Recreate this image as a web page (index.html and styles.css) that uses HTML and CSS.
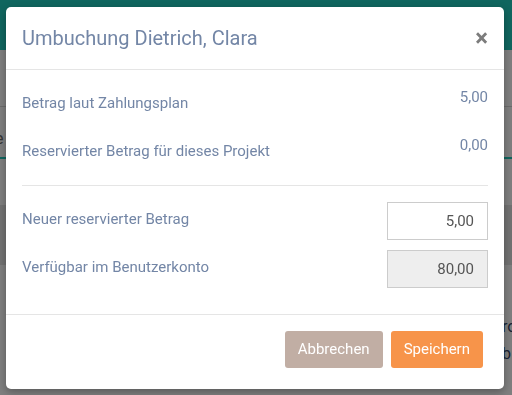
FILE: index.html
```html
<!DOCTYPE html>
<html>
<head lang="de">
    <meta charset="UTF-8">
    <title>Umbuchung</title>
    <link rel="stylesheet" href="styles.css">
</head>
<body>

<div class="page">
    <div class="page-header"></div>
    <div class="page-tabs"></div>
    <div class="page-text">e</div>
    <div class="page-band"></div>
    <div class="page-side">
        <p>ro</p>
        <p>b</p>
    </div>
</div>

<div class="modal-bg"></div>

<div class="modal">
    <div class="modal-header">
        <h4 class="modal-title">Umbuchung Dietrich, Clara</h4>
        <a href="javascript:void(0);" class="close">&times;</a>
    </div>

    <div class="modal-body">
        <div class="form-row">
            <label>Betrag laut Zahlungsplan</label>
            <span class="form-value">5,00</span>
        </div>
        <div class="form-row">
            <label>Reservierter Betrag für dieses Projekt</label>
            <span class="form-value">0,00</span>
        </div>

        <hr class="divider">

        <div class="form-row">
            <label>Neuer reservierter Betrag</label>
            <input type="text" class="form-input" value="5,00">
        </div>
        <div class="form-row">
            <label>Verfügbar im Benutzerkonto</label>
            <input type="text" class="form-input" value="80,00" readonly>
        </div>
    </div>

    <div class="modal-footer">
        <a href="javascript:void(0);" class="btn btn-cancel">Abbrechen</a>
        <a href="javascript:void(0);" class="btn btn-save">Speichern</a>
    </div>
</div>

</body>
</html>
```

FILE: styles.css
```css
html, body, div, p, span, h4, a, hr, label {
    padding: 0px;
    margin: 0px;
}

body {
    font-family: Roboto, "Liberation Sans", sans-serif;
    background: #ffffff;
    width: 512px;
    height: 395px;
    overflow: hidden;
}

a {
    text-decoration: none;
}

/* Seite im Hintergrund */
.page-header {
    height: 50px;
    background: #20ccbe;
}

.page-tabs {
    height: 56px;
    border-bottom: #d6d6d6 1px solid;
}

.page-text {
    font-size: 16px;
    color: #6a6a6a;
    line-height: 20px;
    margin-top: 22px;
    margin-left: -5px;
    border-bottom: #20ccbe 2px solid;
    height: 28px;
}

.page-band {
    margin-top: 46px;
    height: 60px;
    background: #e4e4e4;
}

.page-side {
    margin-top: 48px;
    margin-left: 502px;
    font-size: 16px;
    line-height: 27px;
    color: #34466a;
}

/* Abdunkelung */
.modal-bg {
    position: fixed;
    top: 0px;
    left: 0px;
    width: 100%;
    height: 100%;
    background: #000000;
    opacity: 0.5;
}

/* Dialog */
.modal {
    position: absolute;
    top: 7px;
    left: 6px;
    width: 498px;
    height: 382px;
    background: #ffffff;
    border-radius: 5px;
    box-shadow: 0px 3px 9px rgba(0, 0, 0, 0.3);
    display: flex;
    flex-direction: column;
}

.modal-header {
    display: flex;
    align-items: center;
    justify-content: space-between;
    padding: 16px 16px;
    border-bottom: #e5e5e5 1px solid;
}

.modal-title {
    font-size: 20px;
    font-weight: normal;
    line-height: 30px;
    color: #7386a6;
}

.close {
    font-size: 24px;
    font-weight: bold;
    line-height: 20px;
    color: #7c7c7c;
    margin-right: 0px;
}

.modal-body {
    padding: 16px 16px;
}

.form-row {
    display: flex;
    justify-content: space-between;
    align-items: flex-start;
    height: 38px;
    margin-bottom: 10px;
}

.form-row label {
    font-size: 15px;
    line-height: 20px;
    padding-top: 7px;
    color: #7386a6;
}

.form-value {
    font-size: 15px;
    line-height: 20px;
    padding-top: 1px;
    color: #7386a6;
}

.divider {
    border: none;
    border-top: #e5e5e5 1px solid;
    margin: 13px 0px 16px 0px;
}

.form-input {
    box-sizing: border-box;
    width: 101px;
    height: 38px;
    border: #cccccc 1px solid;
    padding: 0px 13px;
    text-align: right;
    font-family: Roboto, "Liberation Sans", sans-serif;
    font-size: 15px;
    color: #555555;
    background: #ffffff;
}

.form-input[readonly] {
    background: #eeeeee;
}

.modal-footer {
    flex: 1;
    display: flex;
    justify-content: flex-end;
    align-items: flex-start;
    gap: 8px;
    padding: 16px 21px 0px 0px;
    border-top: #e5e5e5 1px solid;
}

.btn {
    display: block;
    height: 37px;
    line-height: 37px;
    padding: 0px 13px;
    font-size: 15px;
    color: #ffffff;
    border-radius: 3px;
}

.btn-cancel {
    background: #c1aea4;
}

.btn-save {
    background: #f7944a;
}
```
